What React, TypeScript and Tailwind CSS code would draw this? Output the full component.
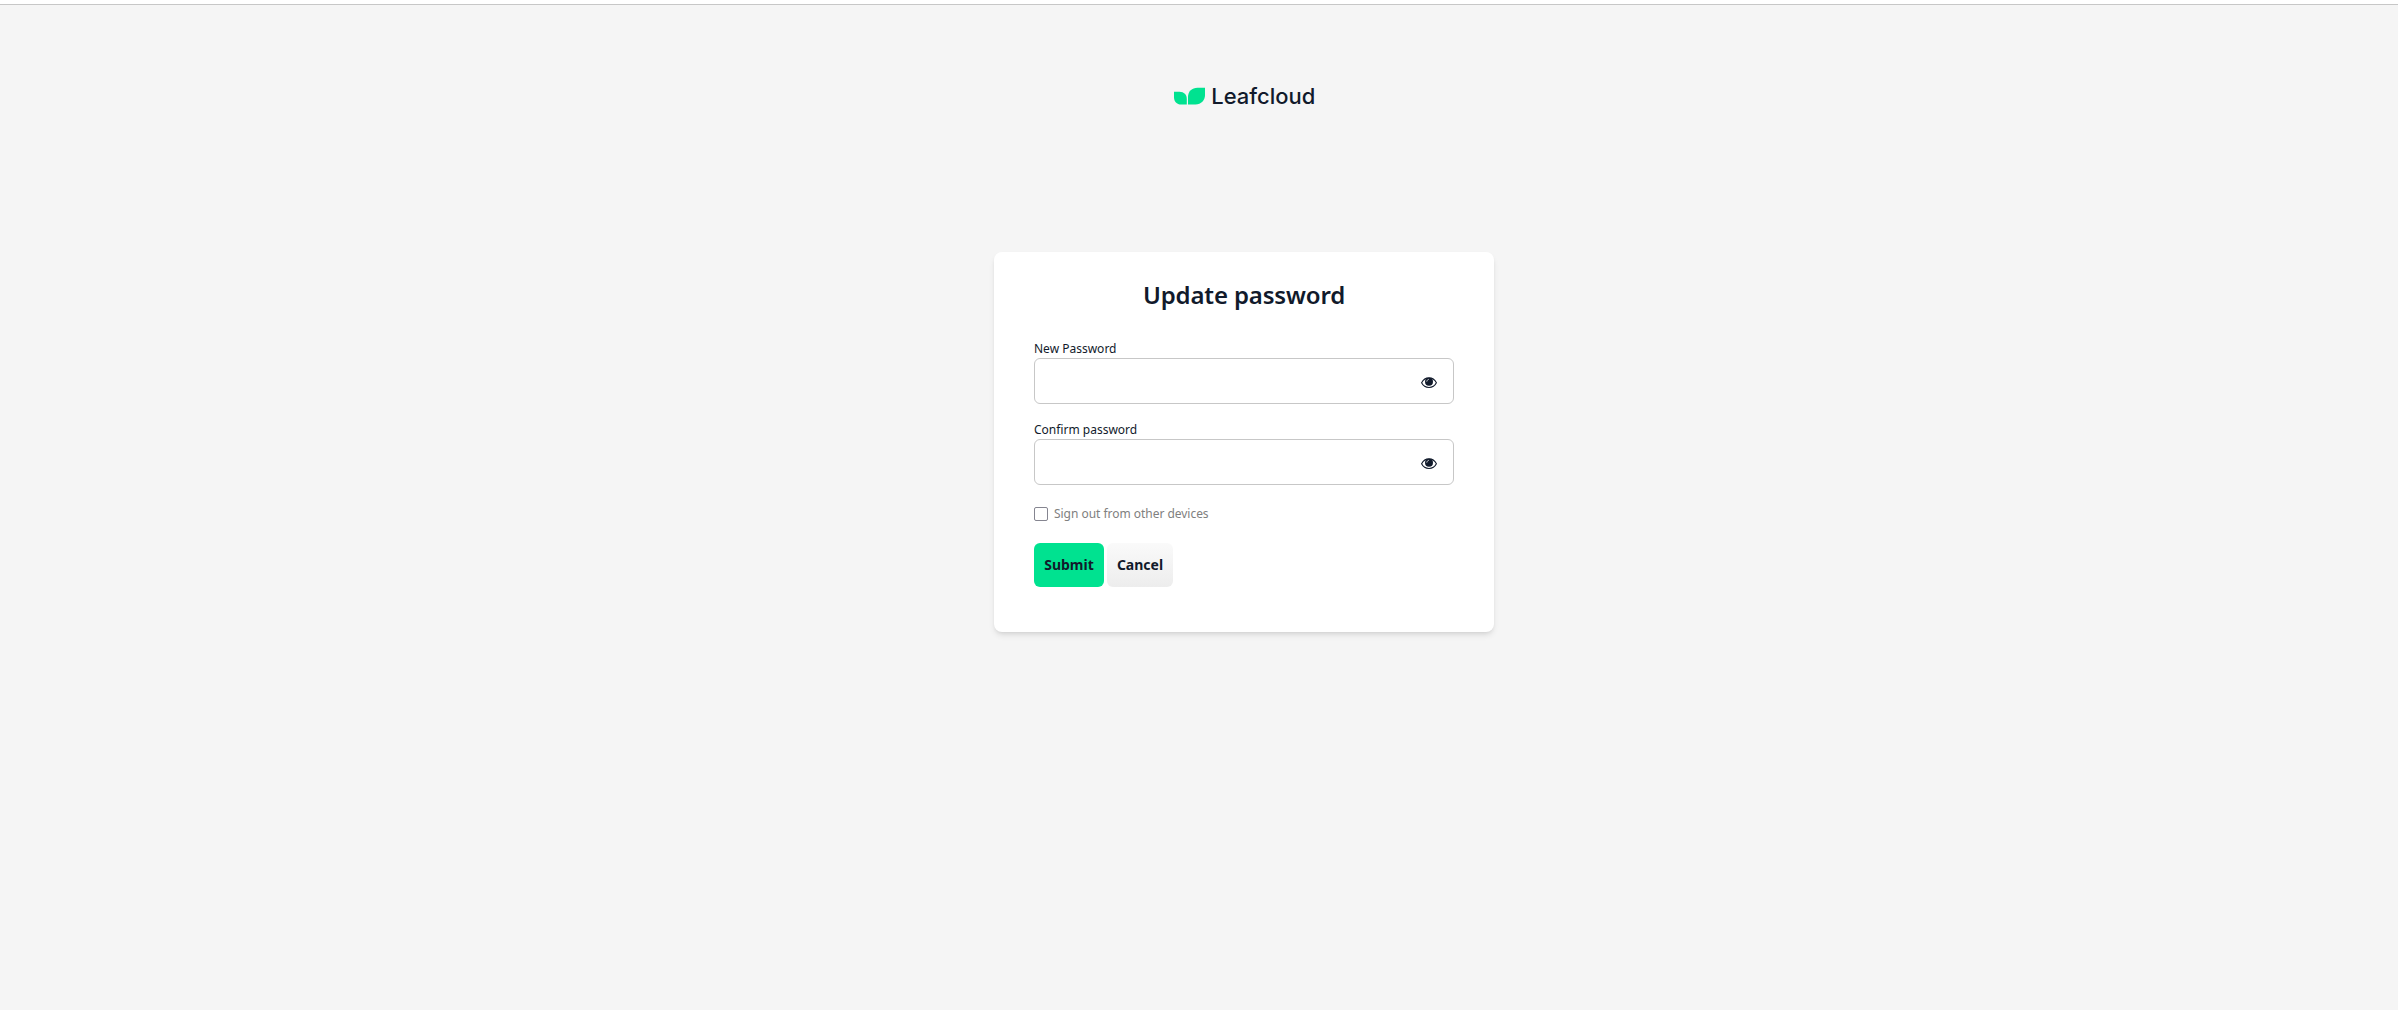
function Logo() {
  return (
    <svg width="164" height="40" viewBox="-12 -10 164 40" role="img" aria-label="Leafcloud">
      <path fill="#00e290" d="M0 4.700H5.500C10 4.700 12.800 7.800 12.800 11.800V17.500H7C2.800 17.500 0 14.400 0 10.200z" />
      <path fill="#00e290" d="M31 .8H23.500C18 .8 14 4.500 14 9.900V17.500H21.500C27.200 17.500 31 13.500 31 8.100z" />
      <text x="37.300" y="17.300" textLength="104" lengthAdjust="spacingAndGlyphs" fill="#111a2b" className="font-['Inter'] text-[22px] font-medium">Leafcloud</text>
    </svg>
  );
}

function Eye() {
  return (
    <svg width="16" height="12" viewBox="0 0 16 12" aria-hidden="true">
      <path d="M.6 5.800C2.300 2.400 5 .9 8 .9S13.700 2.400 15.400 5.800C13.700 9.200 11 10.500 8 10.500S2.300 9.200.6 5.800z" fill="none" stroke="#111a2b" strokeWidth="1.100" />
      <circle cx="8" cy="4.800" r="4" fill="#111a2b" />
      <path d="M5.800 4.300C5.900 3.300 6.600 2.600 7.500 2.400" fill="none" stroke="#fff" strokeWidth=".7" strokeLinecap="round" />
    </svg>
  );
}

function PasswordField({ label, id }: { label: string; id: string }) {
  return (
    <div className="mb-[17px]">
      <label htmlFor={id} className="block pb-px text-xs leading-[17px]">{label}</label>
      <div className="flex h-[46px] items-center rounded-md border border-[#c7c7c7] bg-white pr-4">
        <input id={id} type="password" className="h-full min-w-0 flex-1 bg-transparent px-3 outline-none" />
        <button type="button" aria-label="Show password" className="mt-1">
          <Eye />
        </button>
      </div>
    </div>
  );
}

export default function App() {
  return (
    <div className="flex h-screen flex-col bg-[#f5f5f5] font-['Noto_Sans',sans-serif] text-[#111a2b]">
      <div className="h-[5px] border-b border-[#c7c7c7] bg-white" />
      <div className="flex flex-col items-center pl-[90px]">
        <header className="flex h-[247px] justify-center pt-[72px]">
          <Logo />
        </header>
        <main className="h-[380px] w-[500px] rounded-lg bg-white px-10 pt-[25px] shadow-md">
          <h1 className="mb-[27px] text-center text-2xl leading-9 font-semibold tracking-[-0.15px]">Update password</h1>
          <form>
            <PasswordField id="new-password" label="New Password" />
            <PasswordField id="confirm-password" label="Confirm password" />
            <label className="mt-[22px] flex h-[14px] items-center gap-[6px] text-xs text-[#808080]">
              <input type="checkbox" className="size-[14px] appearance-none rounded-[2px] border border-[#858590]" />
              <span className="-mt-px tracking-[-0.03px]">Sign out from other devices</span>
            </label>
            <div className="mt-[22px] flex gap-[3px] text-sm font-bold">
              <button type="button" className="h-11 w-[70px] rounded-md bg-[#00e290]">Submit</button>
              <button type="button" className="h-11 w-[66px] rounded-md bg-linear-to-b from-[#fafafa] to-[#ededed]">Cancel</button>
            </div>
          </form>
        </main>
      </div>
    </div>
  );
}
